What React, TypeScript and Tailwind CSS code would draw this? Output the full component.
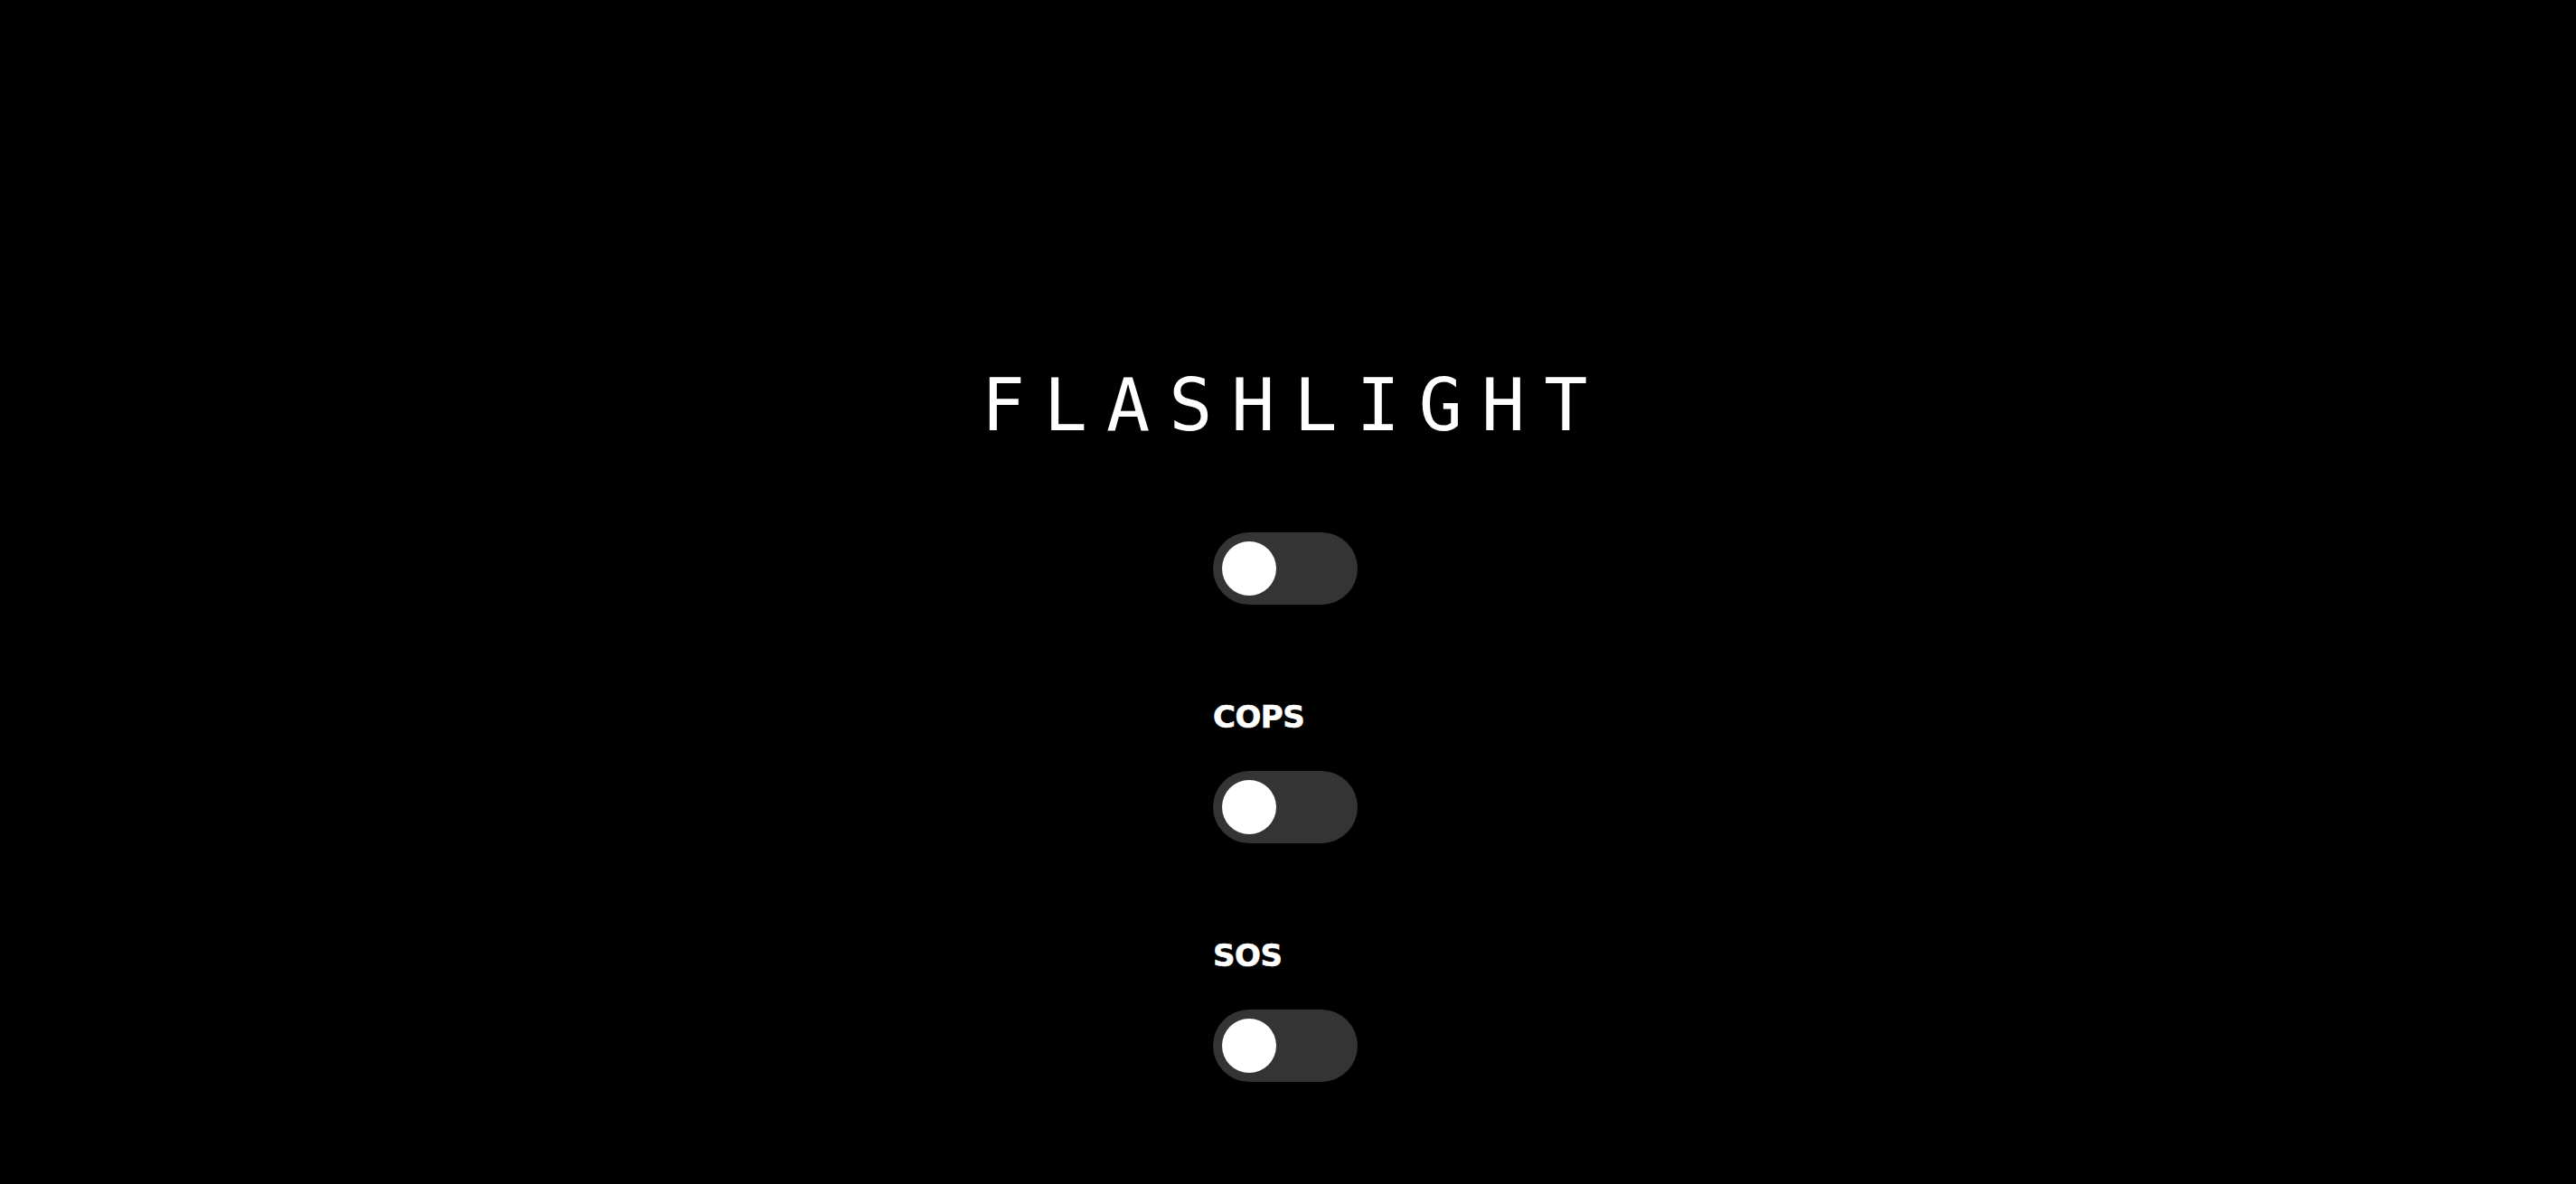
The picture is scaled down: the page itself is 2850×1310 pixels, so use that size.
import { useState } from 'react'

type ToggleProps = {
  on: boolean
  onChange: (v: boolean) => void
}

function Toggle({ on, onChange }: ToggleProps) {
  return (
    <button
      type="button"
      onClick={() => onChange(!on)}
      className={`flex h-[80px] w-[160px] items-center rounded-full p-[10px] ${on ? 'bg-[#4cd964] justify-end' : 'bg-[#343434] justify-start'}`}
    >
      <span className="block h-[60px] w-[60px] rounded-full bg-white" />
    </button>
  )
}

export default function App() {
  const [light, setLight] = useState(false)
  const [cops, setCops] = useState(false)
  const [sos, setSos] = useState(false)

  return (
    <div className="min-h-screen w-full bg-black text-white">
      <div className="flex flex-col items-center pt-[402px]">
        <h1 className="pl-[13px] text-[80px] leading-[93px] tracking-[21px] font-normal font-['DejaVu_Sans_Mono',monospace]">
          FLASHLIGHT
        </h1>
        <div className="mt-[94px] mr-[6px] flex w-[160px] flex-col items-start font-['DejaVu_Sans',sans-serif]">
          <Toggle on={light} onChange={setLight} />
          <div className="mt-[106px] text-[34px] font-bold leading-[37px] tracking-[-0.5px] [-webkit-text-stroke:0.6px_white]">COPS</div>
          <div className="mt-[41px]">
            <Toggle on={cops} onChange={setCops} />
          </div>
          <div className="mt-[106px] text-[34px] font-bold leading-[37px] tracking-[-0.5px] [-webkit-text-stroke:0.6px_white]">SOS</div>
          <div className="mt-[41px]">
            <Toggle on={sos} onChange={setSos} />
          </div>
        </div>
      </div>
    </div>
  )
}
